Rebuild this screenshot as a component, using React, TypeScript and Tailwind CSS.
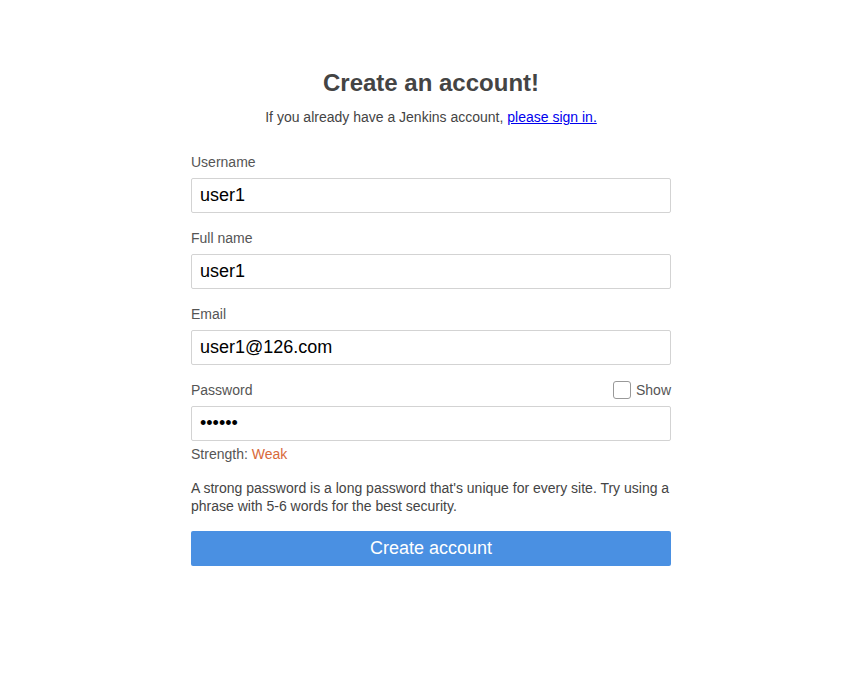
import React from "react";

const font = { fontFamily: '"Liberation Sans", Arial, sans-serif' };

function Field({ label, value, type = "text", right }: { label: string; value: string; type?: string; right?: React.ReactNode }) {
  return (
    <div className="flex flex-col">
      <div className="flex items-center justify-between h-4 mb-2">
        <span className="text-[14px] leading-4 text-[#555]">{label}</span>
        {right}
      </div>
      <input
        readOnly
        type={type}
        value={value}
        className="h-[35px] w-full rounded-[2px] border border-[#d3d3d3] bg-white px-2 text-[18px] text-black outline-none"
        style={font}
      />
    </div>
  );
}

export default function App() {
  return (
    <div className="min-h-[683px] w-full bg-white pl-[2px]" style={font}>
      <div className="mx-auto flex w-[480px] flex-col pt-[69px]">
        <h1 className="text-center text-[24px] leading-7 font-bold text-[#444]">Create an account!</h1>
        <p className="mt-3 text-center text-[14px] leading-4 text-[#444]">
          If you already have a Jenkins account,{" "}
          <a href="#" className="text-[#0000ee] underline">please sign in.</a>
        </p>
        <div className="mt-[29px] flex flex-col gap-[17px]">
          <Field label="Username" value="user1" />
          <Field label="Full name" value="user1" />
          <Field label="Email" value="user1@126.com" />
          <div className="flex flex-col">
            <Field
              label="Password"
              value="123456"
              type="password"
              right={
                <label className="flex items-center gap-[5px] text-[14px] leading-4 text-[#555]">
                  <span className="inline-block h-[18px] w-[18px] rounded-[3px] border border-[#999] bg-white" />
                  Show
                </label>
              }
            />
            <div className="mt-[5px] text-[14px] leading-4 text-[#555]">
              Strength: <span className="text-[#d8693a]">Weak</span>
            </div>
          </div>
        </div>
        <p className="mt-[17px] text-[14px] leading-[18px] text-[#444]">
          A strong password is a long password that's unique for every site. Try using a phrase with 5-6 words for the best security.
        </p>
        <button className="mt-4 h-[35px] w-full rounded-[2px] bg-[#4a90e2] text-[18px] text-white" style={font}>
          Create account
        </button>
      </div>
    </div>
  );
}
